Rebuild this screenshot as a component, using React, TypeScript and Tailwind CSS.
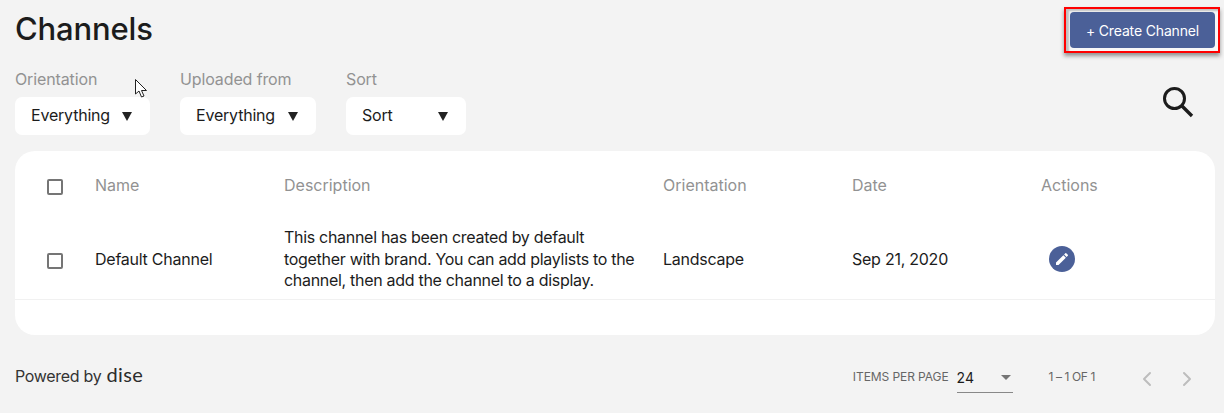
import { ChevronLeft, ChevronRight } from "lucide-react";

const cols = "grid grid-cols-[80px_189px_379px_189px_189px_174px] items-center";

function Filter({ label, value, width, gap }: { label: string; value: string; width: string; gap: string }) {
  return (
    <div className="flex flex-col">
      <div className="h-[17px] text-[16px] leading-[17px] tracking-[-0.12px] text-[#929292] whitespace-nowrap">{label}</div>
      <div className={`mt-[9px] h-[38px] ${width} flex items-center pl-[16px] bg-white rounded-[7px] text-[16px] tracking-[-0.2px] text-[#1c1c1c] whitespace-nowrap`}>
        <span className="mb-[2px]">{value}</span>
        <span className={`${gap} mt-[1px] w-0 h-0 border-l-[5px] border-r-[5px] border-t-[9px] border-l-transparent border-r-transparent border-t-[#222]`} />
      </div>
    </div>
  );
}

function Box() {
  return <div className="ml-[32px] mt-[4px] w-[16px] h-[16px] border-2 border-[#757575] rounded-[2px]" />;
}

export default function App() {
  return (
    <div className="relative w-[1224px] h-[413px] overflow-hidden bg-[#f3f3f3] font-['Inter','Liberation_Sans',sans-serif] pl-[15px] pr-[9px]">
      <div className="flex justify-between h-[71px]">
        <h1 className="mt-[11px] text-[31px] leading-[36px] tracking-[-0.15px] font-medium text-[#1c1c1c]">Channels</h1>
        <div className="mt-[7px] mr-[-5px] h-[46px] w-[156px] border-2 border-[#ff0000] bg-[#f7f7f7] shadow-[0_3px_4px_rgba(0,0,0,0.4),inset_3px_2px_2px_rgba(0,0,0,0.22)] pl-[4px] pt-[3px]">
          <button className="block w-[145px] h-[36px] rounded-[4px] bg-[#4b6098] text-white text-[14px] tracking-[-0.15px]">+ Create Channel</button>
        </div>
      </div>

      <div className="flex justify-between items-start">
        <div className="flex gap-[30px]">
          <Filter label="Orientation" value="Everything" width="w-[135px]" gap="ml-[12px]" />
          <Filter label="Uploaded from" value="Everything" width="w-[136px]" gap="ml-[13px]" />
          <Filter label="Sort" value="Sort" width="w-[120px]" gap="ml-[45px]" />
        </div>
        <svg width="34" height="34" viewBox="0 0 34 34" className="mt-[14px] mr-[20px]" fill="none" stroke="#1c1c1c">
          <circle cx="13.5" cy="13.5" r="10" strokeWidth="3" />
          <path d="M20.5 20.5 L31 31" strokeWidth="3.4" />
        </svg>
      </div>

      <div className="mt-[16px] h-[184px] w-[1200px] bg-white rounded-[20px] overflow-hidden">
        <div className={`${cols} h-[67px] text-[16px] text-[#929292]`}>
          <Box />
          <div>Name</div>
          <div>Description</div>
          <div>Orientation</div>
          <div>Date</div>
          <div>Actions</div>
        </div>
        <div className={`${cols} h-[82px] border-b border-[#f1f1f1] text-[16px] tracking-[-0.25px] text-[#1c1c1c]`}>
          <Box />
          <div>Default Channel</div>
          <div className="mt-[2px] leading-[21.5px] w-[365px] tracking-[-0.3px]">
            This channel has been created by default together with brand. You can add playlists to the channel, then add the channel to a display.
          </div>
          <div>Landscape</div>
          <div>Sep 21, 2020</div>
          <div className="ml-[8px] w-[26px] h-[26px] rounded-full bg-[#4b6098] flex items-center justify-center">
            <svg width="16" height="16" viewBox="0 0 24 24" fill="#fff">
              <path d="M3 17.25V21h3.75L17.81 9.94l-3.75-3.75L3 17.25zM20.71 7.04a1 1 0 0 0 0-1.41l-2.34-2.34a1 1 0 0 0-1.41 0l-1.83 1.83 3.75 3.75 1.83-1.83z" />
            </svg>
          </div>
        </div>
      </div>

      <div className="mt-[26px] flex items-center justify-between w-[1200px] h-[32px]">
        <div className="flex items-baseline text-[16px] tracking-[-0.3px] text-[#333] mb-[7px]">
          <span>Powered by</span>
          <span className="ml-[5px] text-[20px] font-['Lato',sans-serif] tracking-[0.4px] font-normal text-[#2c2c2c]">dise</span>
        </div>
        <div className="flex items-center text-[#666]">
          <span className="text-[12px] tracking-[-0.08px]">ITEMS PER PAGE</span>
          <div className="ml-[8px] w-[56px] h-[27px] border-b border-[#888] flex items-center justify-between pr-[1px] pb-[2px] mt-[4px]">
            <span className="text-[14px] text-[#1c1c1c]">24</span>
            <span className="mr-[1px] w-0 h-0 border-l-[5px] border-r-[5px] border-t-[5px] border-l-transparent border-r-transparent border-t-[#757575]" />
          </div>
          <span className="ml-[36px] text-[12px] tracking-[-0.4px] mr-[6px]">1 – 1 OF 1</span>
          <ChevronLeft className="ml-[34px] mt-[4px]" size={24} color="#bdbdbd" strokeWidth={2} />
          <ChevronRight className="ml-[16px] mr-[16px] mt-[4px]" size={24} color="#bdbdbd" strokeWidth={2} />
        </div>
      </div>

      <svg className="absolute left-[135px] top-[79px]" width="14" height="20" viewBox="0 0 14 20">
        <path d="M0.5 0.5 L0.5 15 L4 12 L6.5 18 L9 17 L6.5 11.5 L11.5 11.5 Z" fill="#fff" stroke="#222" strokeWidth="1" />
      </svg>
    </div>
  );
}
